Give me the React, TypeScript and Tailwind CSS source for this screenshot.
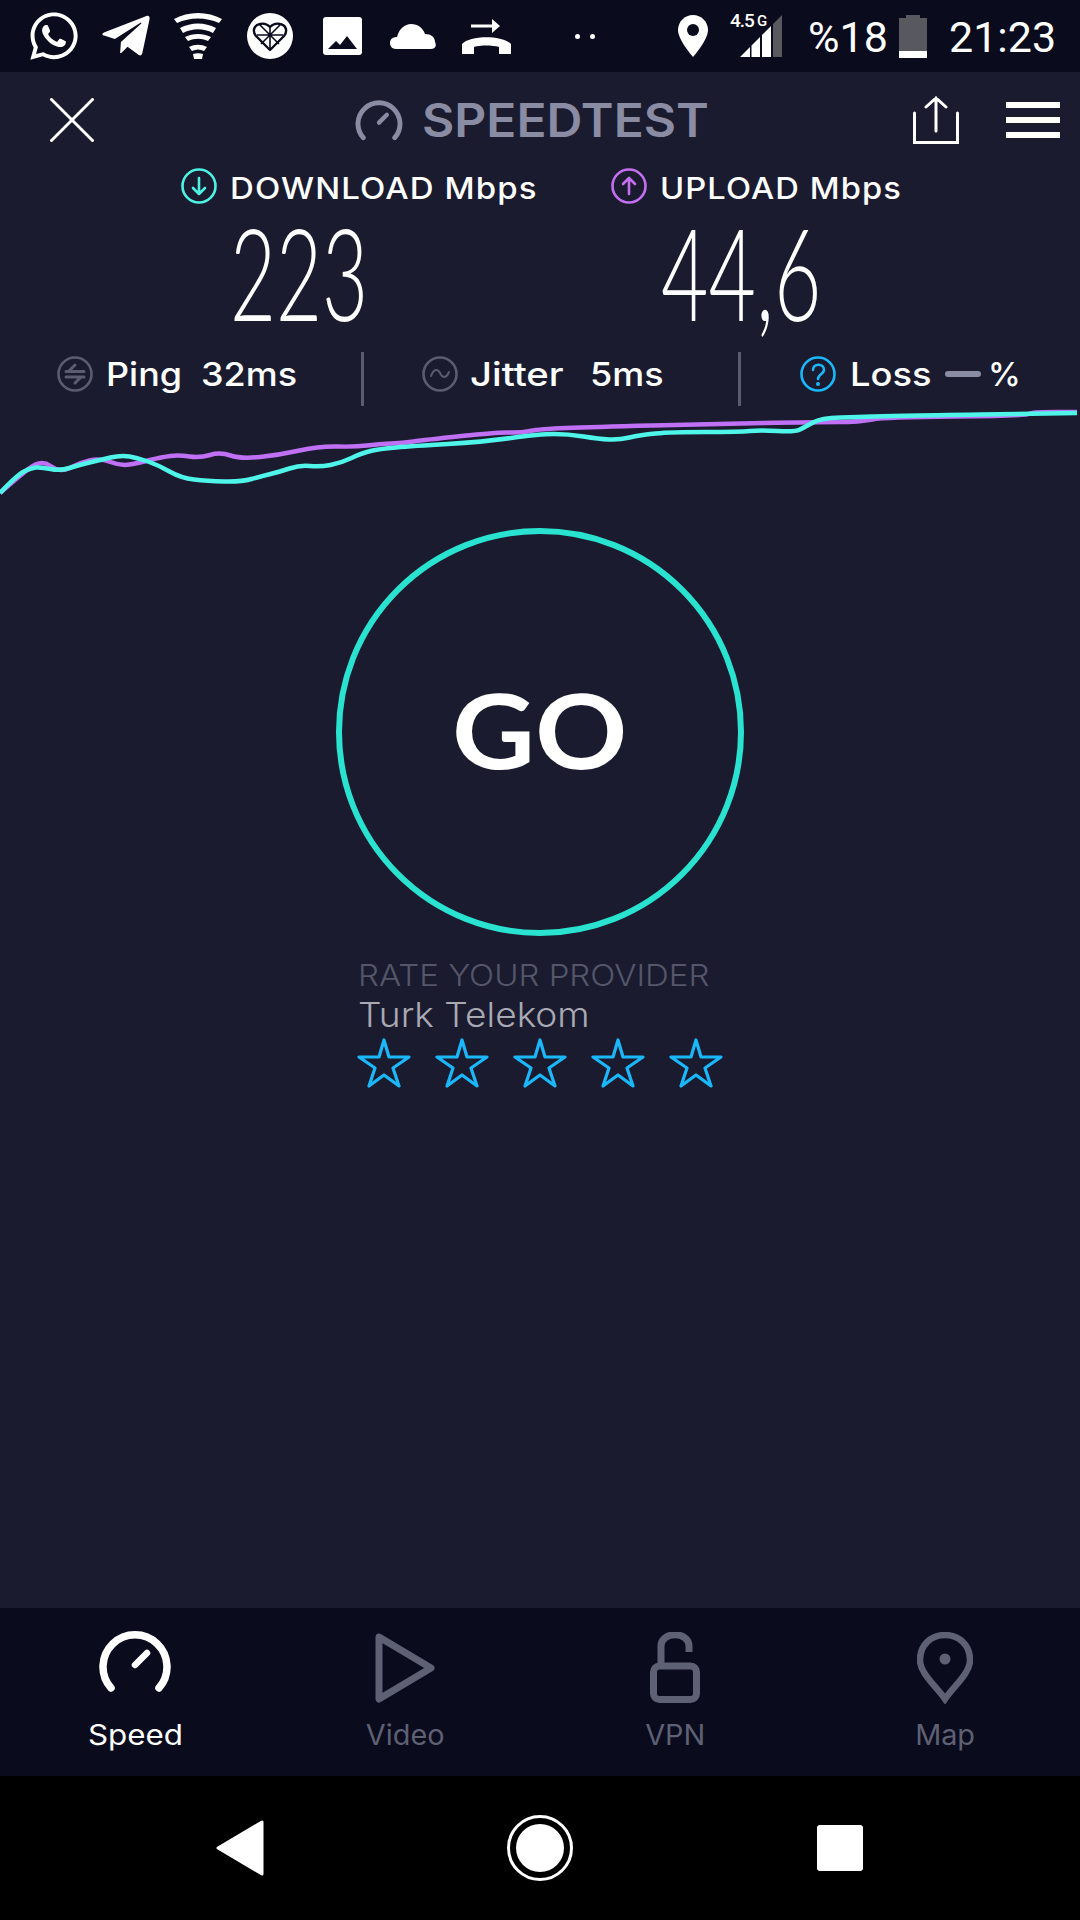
import { FaTelegramPlane, FaWhatsapp } from 'react-icons/fa';

const cyanLine = "0,493 17,475 31,468 41,467 60,471 79,465 100,460 121,455 138,458 158,465 181,478 207,481 241,482 262,476 279,472 300,465 320,467 341,463 362,453 379,449 413,446 482,442 540,434 568,434 599,439 619,440 640,435 671,432 740,432 760,430 795,432 805,427 821,418 860,417 884,416 1077,413";
const purpleLine = "0,493 17,478 41,459 60,473 79,463 100,458 121,466 138,463 162,457 179,455 200,458 220,452 241,459 279,455 320,446 355,447 379,444 403,443 424,440 499,432 520,433 540,429 592,427 712,424 815,422 860,422 884,417 1026,416 1031,412 1077,412";

// rounds the corners of the graph lines
const smoothPath = (line: string) => {
    const pts = line.split(" ").map((p) => p.split(",").map(Number));
    let d = `M${pts[0][0]} ${pts[0][1]}`;
    for (let i = 1; i < pts.length - 1; i++) {
        const mx = (pts[i][0] + pts[i + 1][0]) / 2;
        const my = (pts[i][1] + pts[i + 1][1]) / 2;
        d += ` Q${pts[i][0]} ${pts[i][1]} ${mx} ${my}`;
    }
    const last = pts[pts.length - 1];
    return `${d} L${last[0]} ${last[1]}`;
};

function Gauge({ className, stroke }: { className: string; stroke: string }) {
    return (
        <svg viewBox="0 0 72 64" className={className} fill="none" stroke={stroke} strokeLinecap="round">
            <path d="M12 59 A32 32 0 1 1 60 59" strokeWidth="7.5" />
            <path d="M36 36 L48 24" strokeWidth="6.5" />
        </svg>
    );
}

function Star() {
    return (
        <svg viewBox="0 0 54 50" className="w-[54px] h-[50px]" fill="none" stroke="#1ab8fb" strokeWidth="3.2" strokeLinejoin="round">
            <path d="M27 2 L32 19 L52 19 L36 30 L42 48 L27 37 L12 48 L18 30 L2 19 L22 19 Z" />
        </svg>
    );
}

function StatusBar() {
    return (
        <div className="h-[72px] bg-[#0a0b1c] flex items-center pl-[27px] text-white font-['Roboto',sans-serif]">
            <FaWhatsapp className="w-[54px] h-[54px] shrink-0" />
            <FaTelegramPlane className="w-[54px] h-[54px] ml-[18px] shrink-0" />
            <svg viewBox="0 0 48 46" className="w-[48px] h-[46px] ml-[21px] shrink-0" fill="#fff">
                <path d="M0 6 C14 -2 34 -2 48 6 L45 10 C32 4 16 4 3 10 Z" />
                <path d="M6 15 C17 9 31 9 42 15 L39 20 C29 15 19 15 9 20 Z" />
                <path d="M11 24 C19 20 29 20 37 24 L34 28 C27 25 21 25 14 28 Z" />
                <path d="M15 34 C21 31 27 31 33 34 L30 38 C26 36 22 36 18 38 Z" />
                <path d="M19 41 C22 40 26 40 29 41 L28 46 L20 46 Z" />
            </svg>
            <svg viewBox="0 0 46 46" className="w-[46px] h-[46px] ml-[25px] shrink-0">
                <circle cx="23" cy="23" r="23" fill="#fff" />
                <path d="M23 37 L9 23 C5 18 7 12 13 11 C17 10 21 12 23 14 C25 12 29 10 33 11 C39 12 41 18 37 23 Z" fill="#fff" stroke="#0a0b1c" strokeWidth="2.4" strokeLinejoin="round" />
                <path d="M23 14 V37 M10 22 H36 M13 12 L32 31 M33 12 L14 31" stroke="#0a0b1c" strokeWidth="1.6" />
            </svg>
            <svg viewBox="0 0 39 38" className="w-[39px] h-[38px] ml-[30px] shrink-0">
                <rect width="39" height="38" rx="3" fill="#fff" />
                <path d="M5 32 L13 24 L17 28 L24 19 L34 32 Z" fill="#0a0b1c" />
            </svg>
            <svg viewBox="0 0 47 25" className="w-[47px] h-[25px] ml-[28px] shrink-0" fill="#fff">
                <path d="M6 25 C2 25 0 22 0 19 C0 15 3 13 7 13 C9 5 15 0 21 0 C28 0 33 4 35 10 C41 10 45 13 45 18 C47 22 45 25 41 25 Z" />
            </svg>
            <svg viewBox="0 0 49 36" className="w-[49px] h-[36px] ml-[25px] shrink-0" fill="#fff">
                <path d="M9 6.5 H30 V1 L38 8 L30 15 V9.5 H9 Z" />
                <path d="M0 26 C8 17 40 17 49 26 L49 36 L37 36 L37 29 C30 27 18 27 12 29 L12 36 L0 36 Z" />
            </svg>
            <div className="w-[5px] h-[5px] rounded-full bg-white ml-[64px] shrink-0" />
            <div className="w-[5px] h-[5px] rounded-full bg-white ml-[10px] shrink-0" />
            <svg viewBox="0 0 30 42" className="w-[30px] h-[42px] ml-[83px] shrink-0">
                <path d="M15 0 C6.7 0 0 6.7 0 15 C0 25 15 42 15 42 C15 42 30 25 30 15 C30 6.7 23.3 0 15 0 Z" fill="#fff" />
                <circle cx="15" cy="15" r="6" fill="#0a0b1c" />
            </svg>
            <div className="relative w-[52px] h-[42px] ml-[22px] shrink-0">
                <svg viewBox="0 0 42 42" className="absolute left-[10px] top-0 w-[42px] h-[42px]">
                    <path d="M0 42 L10 32 V42 Z M11.5 30.5 L20 22 V42 H11.5 Z M22 20 L31 11 V42 H22 Z" fill="#fff" />
                    <path d="M33 9 L42 0 V42 H33 Z" fill="#58585f" />
                </svg>
                <div className="absolute left-0 top-[-4px] flex items-start leading-[20px] font-medium">
                    <span className="text-[19px] tracking-[-1px]">4.5</span>
                    <span className="text-[15px] ml-[3px]">G</span>
                </div>
            </div>
            <span className="ml-[26px] w-[77px] text-[43px] leading-[48px] mt-[2px] shrink-0">%18</span>
            <svg viewBox="0 0 28 43" className="w-[28px] h-[43px] ml-[14px] shrink-0">
                <path d="M7 0 H21 V3 H28 V36 H0 V3 H7 Z" fill="#58585f" />
                <rect y="36" width="28" height="7" fill="#fff" />
            </svg>
            <span className="ml-[22px] text-[43px] leading-[48px] mt-[2px] shrink-0">21:23</span>
        </div>
    );
}

export default function App() {
    return (
        <div className="w-[1080px] h-[1920px] flex flex-col overflow-hidden bg-[#1a1b2f] text-white font-['Inter',sans-serif]">
            <StatusBar />

            {/* app header */}
            <div className="h-[96px] flex items-center pl-[50px] shrink-0">
                <svg viewBox="0 0 44 44" className="w-[44px] h-[44px] shrink-0" stroke="#fff" strokeWidth="3" strokeLinecap="round">
                    <path d="M1.5 1.5 L42.5 42.5 M42.5 1.5 L1.5 42.5" />
                </svg>
                <Gauge className="w-[48px] h-[42px] ml-[261px] shrink-0" stroke="#8a8ca3" />
                <span className="ml-[19px] w-[285px] text-[46px] leading-[56px] font-semibold text-[#8a8ca3] shrink-0 whitespace-nowrap origin-left scale-x-[1.08]">SPEEDTEST</span>
                <svg viewBox="0 0 46 48" className="w-[46px] h-[48px] ml-[206px] shrink-0" fill="none" stroke="#fff" strokeWidth="3" strokeLinecap="round">
                    <path d="M1.5 17 V46.5 H44.5 V17" />
                    <path d="M23 35 V2 M13 11 L23 2 L33 11" />
                </svg>
                <div className="ml-[47px] w-[54px] flex flex-col gap-[9px] shrink-0">
                    <div className="h-[6px] bg-white" />
                    <div className="h-[6px] bg-white" />
                    <div className="h-[6px] bg-white" />
                </div>
            </div>

            {/* download / upload labels */}
            <div className="h-[36px] flex items-center shrink-0 text-[30px] font-medium leading-[36px] whitespace-nowrap tracking-[1px]">
                <svg viewBox="0 0 36 36" className="w-[36px] h-[36px] ml-[181px] shrink-0" fill="none" stroke="#4df2e3" strokeWidth="2.6" strokeLinecap="round" strokeLinejoin="round">
                    <circle cx="18" cy="18" r="16.5" />
                    <path d="M18 10 V26 M12 20 L18 26 L24 20" />
                </svg>
                <span className="ml-[13px] mt-[3px] w-[381px] shrink-0 origin-left scale-x-[1.1]">DOWNLOAD Mbps</span>
                <svg viewBox="0 0 36 36" className="w-[36px] h-[36px] shrink-0" fill="none" stroke="#c46ff0" strokeWidth="2.6" strokeLinecap="round" strokeLinejoin="round">
                    <circle cx="18" cy="18" r="16.5" />
                    <path d="M18 26 V10 M12 16 L18 10 L24 16" />
                </svg>
                <span className="ml-[13px] mt-[3px] shrink-0 origin-left scale-x-[1.09]">UPLOAD Mbps</span>
            </div>

            {/* result values */}
            <div className="h-[148px] flex items-start shrink-0 font-['Lato',sans-serif] font-light text-[128px] leading-[136px]">
                <div className="ml-[230px] w-[431px] shrink-0">
                    <span className="inline-block origin-left scale-x-[0.62]">223</span>
                </div>
                <div className="w-[300px] shrink-0">
                    <span className="inline-block origin-left scale-x-[0.64]">44,6</span>
                </div>
            </div>

            {/* ping, jitter, loss */}
            <div className="h-[54px] flex items-start pt-[4px] shrink-0 relative text-[33px] font-medium leading-[36px] whitespace-nowrap">
                <svg viewBox="0 0 36 36" className="w-[36px] h-[36px] ml-[57px] shrink-0" fill="none" stroke="#5a5c70" strokeWidth="2.6" strokeLinecap="round">
                    <circle cx="18" cy="18" r="16.5" />
                    <path d="M9 15.5 H27 M18 9 L12 15 M9 21 H27 M18 27 L24 21" strokeWidth="3" />
                </svg>
                <span className="ml-[13px] w-[95px] shrink-0 origin-left scale-x-[1.09]">Ping</span>
                <span className="w-[160px] shrink-0 origin-left scale-x-[1.09]">32ms</span>
                <div className="w-[3px] h-[54px] -mt-[4px] bg-[#5a5c70] shrink-0" />
                <svg viewBox="0 0 36 36" className="w-[36px] h-[36px] ml-[58px] shrink-0" fill="none" stroke="#5a5c70" strokeWidth="2.6" strokeLinecap="round">
                    <circle cx="18" cy="18" r="16.5" />
                    <path d="M9 20 C12 12 16 13 18 17 C20 22 24 23 27 16" strokeWidth="2" />
                </svg>
                <span className="ml-[12px] w-[120px] shrink-0 origin-left scale-x-[1.16]">Jitter</span>
                <span className="w-[148px] shrink-0 origin-left scale-x-[1.09]">5ms</span>
                <div className="w-[3px] h-[54px] -mt-[4px] bg-[#5a5c70] shrink-0" />
                <svg viewBox="0 0 36 36" className="w-[36px] h-[36px] ml-[59px] shrink-0" fill="none" stroke="#1ab8fb" strokeWidth="2.6" strokeLinecap="round">
                    <circle cx="18" cy="18" r="16.5" />
                    <path d="M13 14 C13 7 24 7 24 14 C24 18 18 18 18 23" strokeWidth="2.6" />
                    <circle cx="18" cy="28" r="1" strokeWidth="2" />
                </svg>
                <span className="ml-[14px] w-[95px] shrink-0 origin-left scale-x-[1.1]">Loss</span>
                <div className="w-[36px] h-[6px] mt-[15px] rounded-full bg-[#8a8ca3] shrink-0" />
                <span className="ml-[7px] shrink-0">%</span>
            </div>

            {/* speed graph */}
            <svg viewBox="0 406 1080 122" className="w-[1080px] h-[122px] shrink-0" fill="none" strokeWidth="4.5" strokeLinejoin="round">
                <path d={smoothPath(purpleLine)} stroke="#c070f5" />
                <path d={smoothPath(cyanLine)} stroke="#4ef5e8" />
            </svg>

            {/* go button */}
            <div className="w-[408px] h-[408px] mx-auto pb-[6px] rounded-full border-[6px] border-[#29e3d0] flex items-center justify-center shrink-0">
                <span className="font-['Lato',sans-serif] text-[104px] font-bold leading-none scale-x-[1.1]">GO</span>
            </div>

            {/* rating */}
            <div className="pl-[358px] pt-[19px] shrink-0 whitespace-nowrap">
                <div className="text-[30px] font-light leading-[40px] text-[#55566a] origin-left scale-x-[1.1]">RATE YOUR PROVIDER</div>
                <div className="text-[34px] font-light leading-[40px] text-[#a9a9b3] origin-left scale-x-[1.09]">Turk Telekom</div>
                <div className="flex gap-[24px] -ml-[1px] mt-[3px]">
                    <Star />
                    <Star />
                    <Star />
                    <Star />
                    <Star />
                </div>
            </div>

            <div className="flex-1" />

            {/* bottom tabs */}
            <div className="h-[168px] bg-[#0a0b1c] grid grid-cols-4 shrink-0 text-[28px] leading-[40px] text-[#5e6074]">
                <div className="flex flex-col items-center">
                    <div className="h-[107px] pt-[21px]">
                        <Gauge className="w-[72px] h-[64px]" stroke="#fff" />
                    </div>
                    <span className="text-white scale-x-[1.12]">Speed</span>
                </div>
                <div className="flex flex-col items-center">
                    <div className="h-[107px] pt-[25px]">
                        <svg viewBox="0 0 60 70" className="w-[60px] h-[70px]" fill="none" stroke="#5e6074" strokeWidth="7" strokeLinejoin="round">
                            <path d="M4 4 L56 35 L4 66 Z" />
                        </svg>
                    </div>
                    <span className="scale-x-[1.03]">Video</span>
                </div>
                <div className="flex flex-col items-center">
                    <div className="h-[107px] pt-[24px]">
                        <svg viewBox="0 0 50 71" className="w-[50px] h-[71px]" fill="none" stroke="#5e6074" strokeWidth="7">
                            <rect x="3.5" y="34" width="43" height="33.5" rx="6" />
                            <path d="M11 34 V14 C11 -1 39 -1 39 14 V20" />
                        </svg>
                    </div>
                    <span className="scale-x-[1.03]">VPN</span>
                </div>
                <div className="flex flex-col items-center">
                    <div className="h-[107px] pt-[24px]">
                        <svg viewBox="0 0 56 72" className="w-[56px] h-[72px]" fill="none" stroke="#5e6074" strokeWidth="6.5">
                            <path d="M28 67 C18 53 3 41 3 28 C3 13 14 3 28 3 C42 3 53 13 53 28 C53 41 38 53 28 67 Z" />
                            <circle cx="28" cy="27" r="5.5" fill="#5e6074" stroke="none" />
                        </svg>
                    </div>
                    <span className="scale-x-[1.03]">Map</span>
                </div>
            </div>

            {/* android nav bar */}
            <div className="h-[144px] bg-black flex items-center shrink-0">
                <svg viewBox="0 0 48 56" className="w-[48px] h-[56px] ml-[216px] shrink-0" fill="#fff" stroke="#fff" strokeWidth="3" strokeLinejoin="round">
                    <path d="M2 28 L46 2 V54 Z" />
                </svg>
                <div className="w-[66px] h-[66px] ml-[243px] rounded-full border-[3px] border-white flex items-center justify-center shrink-0">
                    <div className="w-[48px] h-[48px] rounded-full bg-white" />
                </div>
                <div className="w-[46px] h-[46px] ml-[244px] rounded-[3px] bg-white shrink-0" />
            </div>
        </div>
    );
}
